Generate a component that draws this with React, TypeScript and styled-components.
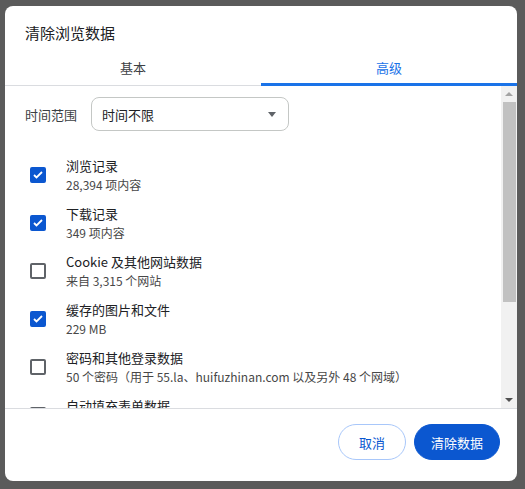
import React from 'react';
import styled, { createGlobalStyle } from 'styled-components';

const Global = createGlobalStyle`
  html, body { margin: 0; padding: 0; }
  body {
    background: #5b5b5b;
    font-family: "Noto Sans CJK SC", "Noto Sans", sans-serif;
    width: 525px; height: 489px; overflow: hidden;
  }
`;

const Backdrop = styled.div`
  padding: 6px 8px 8px 5px;
  height: 489px;
  box-sizing: border-box;
`;

const Dialog = styled.div`
  background: #fff;
  border-radius: 8px;
  height: 475px;
  display: flex;
  flex-direction: column;
  overflow: hidden;
`;

const Title = styled.div`
  font-size: 15px;
  color: #202124;
  padding: 16px 20px 0;
  height: 30px;
`;

const Tabs = styled.div`
  display: flex;
  border-bottom: 1px solid #dadce0;
`;

const Tab = styled.div<{ $active?: boolean }>`
  flex: 1;
  text-align: center;
  font-size: 13px;
  height: 34px;
  line-height: 32px;
  color: ${p => (p.$active ? '#1a73e8' : '#3c4043')};
  border-bottom: 3px solid ${p => (p.$active ? '#1a73e8' : 'transparent')};
  box-sizing: border-box;
  margin-bottom: -1px;
`;

const Body = styled.div`
  display: flex;
  height: 322px;
  border-bottom: 1px solid #dadce0;
`;

const Content = styled.div`
  flex: 1;
  padding: 11px 0 0 20px;
  overflow: hidden;
`;

const Scrollbar = styled.div`
  width: 16px;
  background: #f1f1f1;
  display: flex;
  flex-direction: column;
  align-items: center;
  justify-content: space-between;
  padding: 4px 0;
  box-sizing: border-box;
`;

const ScrollTop = styled.div`
  display: flex;
  flex-direction: column;
  align-items: center;
`;

const Arrow = styled.div<{ $down?: boolean }>`
  width: 0; height: 0;
  border-left: 4px solid transparent;
  border-right: 4px solid transparent;
  ${p => (p.$down ? 'border-top: 4px solid #505050;' : 'border-bottom: 4px solid #a3a3a3;')}
  margin: 2px 0;
`;

const Thumb = styled.div`
  width: 13px;
  background: #c1c1c1;
  height: 200px;
  margin-top: 4px;
  flex: none;
`;

const RangeRow = styled.div`
  display: flex;
  align-items: center;
  gap: 14px;
  font-size: 13px;
  color: #3c4043;
  margin-bottom: 20px;
`;

const Select = styled.div`
  width: 198px;
  height: 34px;
  border: 1px solid #c4c7c5;
  border-radius: 8px;
  display: flex;
  align-items: center;
  justify-content: space-between;
  padding: 0 10px;
  box-sizing: border-box;
  font-size: 13px;
  color: #202124;
`;

const Caret = styled.div`
  border-left: 4px solid transparent;
  border-right: 4px solid transparent;
  border-top: 5px solid #5f6368;
  margin-right: 2px;
`;

const Item = styled.div`
  display: flex;
  align-items: center;
  height: 48px;
`;

const Box = styled.div<{ $checked?: boolean }>`
  width: 16px; height: 16px;
  box-sizing: border-box;
  border-radius: 2px;
  border: 2px solid ${p => (p.$checked ? '#0b57d0' : '#5f6368')};
  background: ${p => (p.$checked ? '#0b57d0' : '#fff')};
  display: flex; align-items: center; justify-content: center;
  margin: 0 20px 0 5px;
  flex: none;
`;

const Label = styled.div`
  font-size: 13px;
  color: #202124;
  line-height: 19px;
`;

const Sub = styled.div`
  font-size: 12px;
  color: #474747;
  line-height: 19px;
  white-space: nowrap;
`;

const Footer = styled.div`
  flex: 1;
  display: flex;
  justify-content: flex-end;
  align-items: center;
  gap: 8px;
  padding: 0 17px 6px 0;
`;

const Button = styled.button<{ $primary?: boolean }>`
  height: 36px;
  border-radius: 18px;
  font-family: inherit;
  font-size: 13px;
  padding: 0 ${p => (p.$primary ? '16px' : '20px')};
  border: 1px solid ${p => (p.$primary ? '#0b57d0' : '#a8c7fa')};
  background: ${p => (p.$primary ? '#0b57d0' : '#fff')};
  color: ${p => (p.$primary ? '#fff' : '#0b57d0')};
`;

const Check = () => (
  <svg width="10" height="8" viewBox="0 0 10 8">
    <path d="M1 4l2.5 2.5L9 1" stroke="#fff" strokeWidth="1.8" fill="none" />
  </svg>
);

const items = [
  { label: '浏览记录', sub: '28,394 项内容', checked: true },
  { label: '下载记录', sub: '349 项内容', checked: true },
  { label: 'Cookie 及其他网站数据', sub: '来自 3,315 个网站', checked: false },
  { label: '缓存的图片和文件', sub: '229 MB', checked: true },
  { label: '密码和其他登录数据', sub: '50 个密码（用于 55.la、huifuzhinan.com 以及另外 48 个网域）', checked: false },
  { label: '自动填充表单数据', sub: '', checked: false },
];

export default function App() {
  return (
    <>
      <Global />
      <Backdrop>
        <Dialog>
          <Title>清除浏览数据</Title>
          <Tabs>
            <Tab>基本</Tab>
            <Tab $active>高级</Tab>
          </Tabs>
          <Body>
            <Content>
              <RangeRow>
                时间范围
                <Select>时间不限<Caret /></Select>
              </RangeRow>
              {items.map(it => (
                <Item key={it.label}>
                  <Box $checked={it.checked}>{it.checked && <Check />}</Box>
                  <div>
                    <Label>{it.label}</Label>
                    <Sub>{it.sub || '\u00a0'}</Sub>
                  </div>
                </Item>
              ))}
            </Content>
            <Scrollbar>
              <ScrollTop>
                <Arrow />
                <Thumb />
              </ScrollTop>
              <Arrow $down />
            </Scrollbar>
          </Body>
          <Footer>
            <Button>取消</Button>
            <Button $primary>清除数据</Button>
          </Footer>
        </Dialog>
      </Backdrop>
    </>
  );
}
